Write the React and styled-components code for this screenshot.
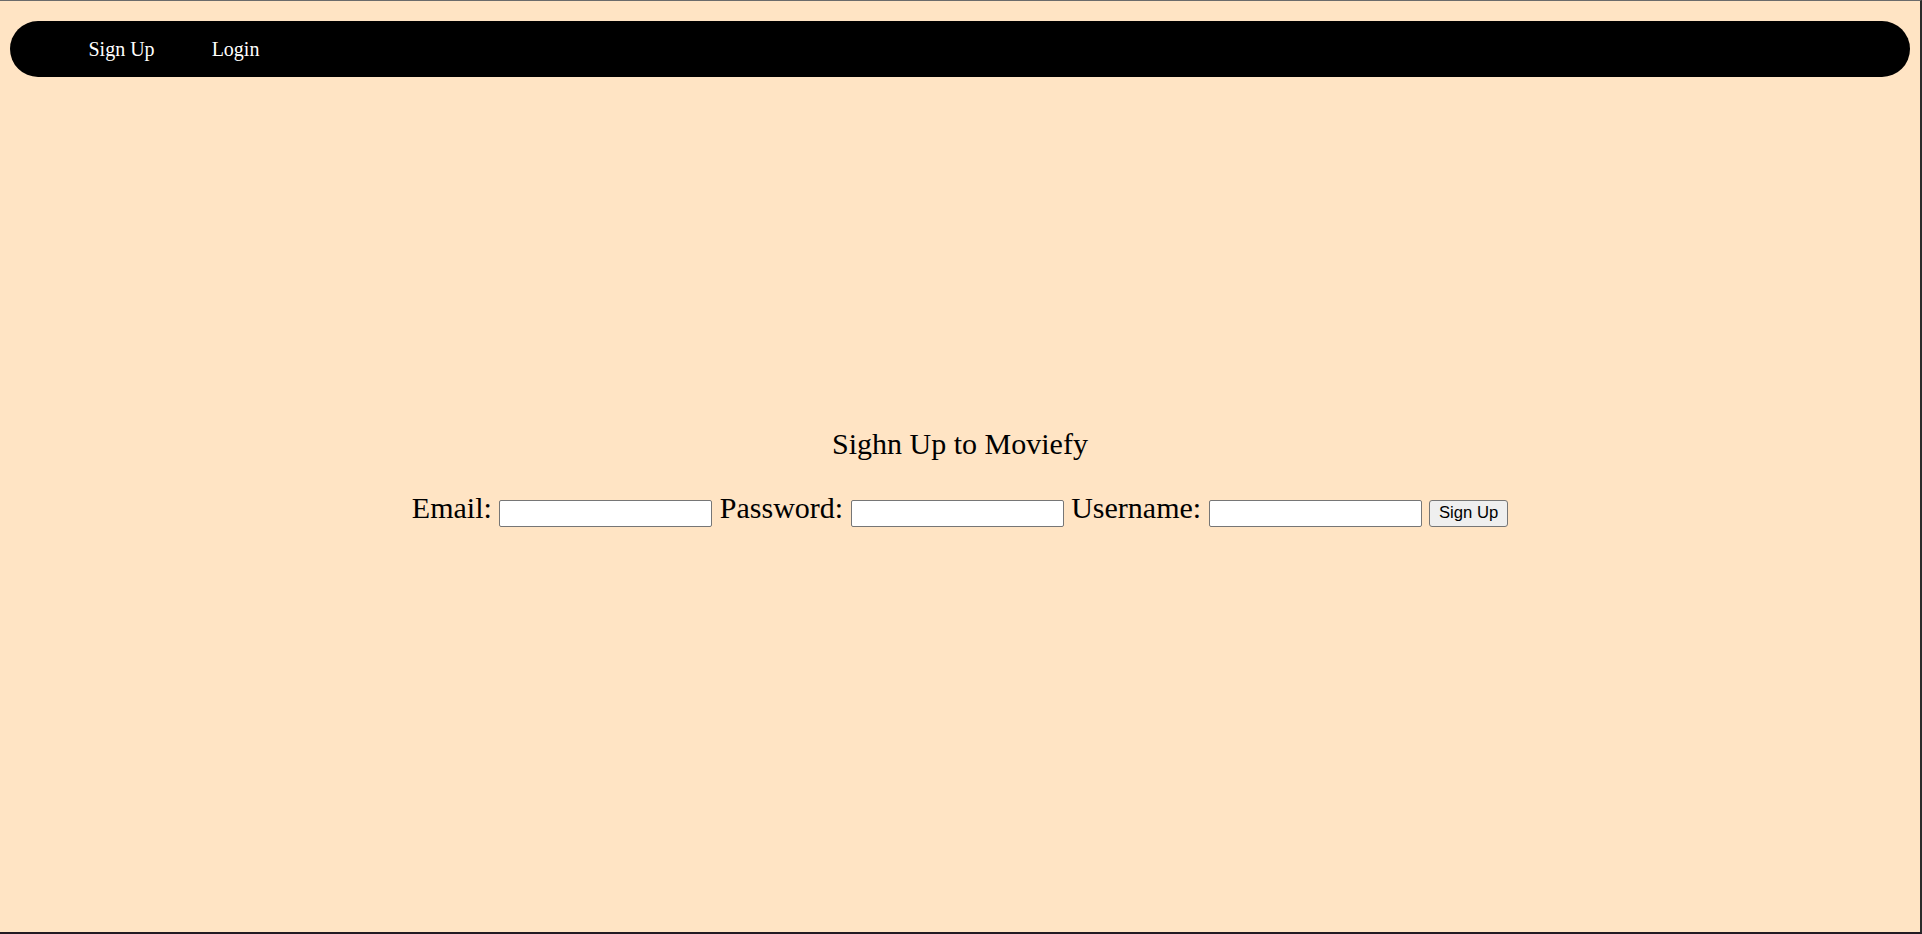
import React from "react";
import styled, { createGlobalStyle } from "styled-components";

const Global = createGlobalStyle`
  html, body {
    margin: 0;
    padding: 0;
    background: #ffe4c4;
  }
  body {
    font-family: "Liberation Serif", "Times New Roman", serif;
  }
`;

const Frame = styled.div`
  box-sizing: border-box;
  min-height: 100vh;
  background: #ffe4c4;
  border-top: 1px solid #6b6b6b;
  border-right: 2px solid #2b2b2b;
  border-bottom: 2px solid #221a22;
  padding: 0 10px;
  display: flex;
  flex-direction: column;
`;

const NavBar = styled.nav`
  margin-top: 20px;
  height: 56px;
  background: #000;
  border-radius: 28px;
  display: flex;
  align-items: center;
  padding-left: 50px;
`;

const NavLink = styled.a`
  color: #fff;
  font-family: "Liberation Serif", "Times New Roman", serif;
  font-size: 20px;
  text-decoration: none;
  padding: 0 28.5px;
  cursor: pointer;
`;

const Main = styled.main`
  text-align: center;
  padding-top: 350px;
`;

const Title = styled.h2`
  margin: 0;
  font-family: "Liberation Serif", "Times New Roman", serif;
  font-weight: normal;
  font-size: 30px;
  line-height: 34px;
  color: #000;
`;

const Form = styled.form`
  margin-top: 30px;
  font-family: "Liberation Serif", "Times New Roman", serif;
  font-size: 30px;
  color: #000;
`;

const Label = styled.label`
  font-size: 30px;
`;

const Input = styled.input`
  box-sizing: border-box;
  width: 213px;
  height: 27px;
  padding: 1px 2px;
  margin: 0;
  border: 1px solid #767676;
  border-radius: 2px;
  background: #fff;
  font-family: "Liberation Sans", Arial, sans-serif;
  font-size: 16.67px;
  vertical-align: baseline;
`;

const Button = styled.button`
  box-sizing: border-box;
  width: 79px;
  height: 27px;
  margin: 0;
  padding: 1px 7px;
  border: 1px solid #767676;
  border-radius: 3px;
  background: #efefef;
  color: #000;
  font-family: "Liberation Sans", Arial, sans-serif;
  font-size: 16.67px;
  vertical-align: baseline;
`;

export default function App() {
  return (
    <>
      <Global />
      <Frame>
        <NavBar>
          <NavLink>Sign Up</NavLink>
          <NavLink>Login</NavLink>
        </NavBar>
        <Main>
          <Title>Sighn Up to Moviefy</Title>
          <Form onSubmit={(e) => e.preventDefault()}>
            <Label>Email:</Label> <Input type="email" />{" "}
            <Label>Password:</Label> <Input type="password" />{" "}
            <Label>Username:</Label> <Input type="text" />{" "}
            <Button type="submit">Sign Up</Button>
          </Form>
        </Main>
      </Frame>
    </>
  );
}
